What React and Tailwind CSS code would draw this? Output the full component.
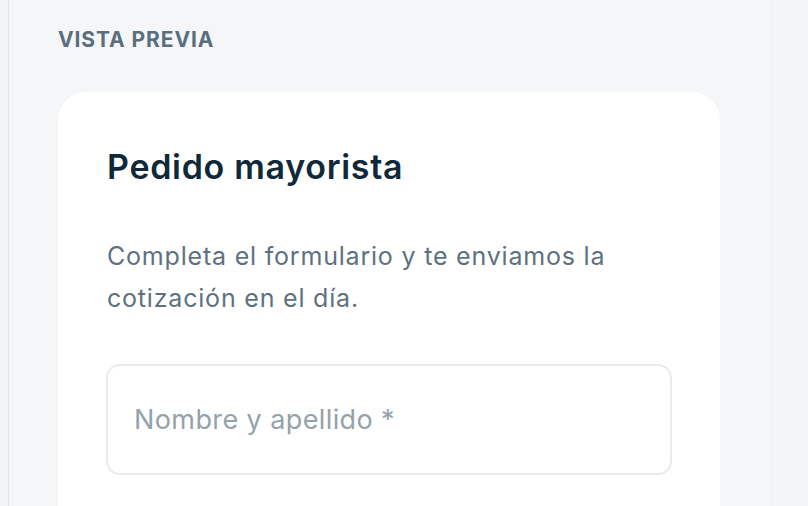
export default function App() {
  return (
    <div
      className="flex h-[506px] w-[808px] overflow-hidden bg-[#f3f4f6]"
      style={{ fontFamily: 'Inter, "Noto Sans", sans-serif' }}
    >
      <div className="w-2 shrink-0 bg-[#f3f4f6]" />
      <main className="flex w-[763px] shrink-0 flex-col border-l border-[#e2e5e8] bg-[#f4f6f8] pl-[49px]">
        <h3 className="mt-[26px] text-[21px] font-bold leading-[28px] tracking-[0.9px] text-[#5a6e7d]">
          VISTA PREVIA
        </h3>
        <section className="mt-[38px] w-[662px] shrink-0 rounded-[28px] bg-white px-[48px] pb-[80px] pt-[55px]">
          <h2 className="pl-px text-[34px] font-semibold leading-[40px] tracking-[0.7px] text-[#10293a]">
            Pedido mayorista
          </h2>
          <p className="mt-[48px] pl-px text-[25px] leading-[42px] tracking-[0.8px] text-[#5e7181]">
            Completa el formulario y te enviamos la cotización en el día.
          </p>
          <input
            type="text"
            placeholder="Nombre y apellido *"
            className="mt-[45px] h-[111px] w-full rounded-[14px] border-2 border-[#e9ebee] px-[26px] text-[27px] tracking-[0.4px] text-[#10293a] outline-none placeholder:text-[#94a2ab]"
          />
        </section>
      </main>
      <aside className="flex-1 border-l border-[#eceef1] bg-[#f4f5f7]" />
    </div>
  );
}
